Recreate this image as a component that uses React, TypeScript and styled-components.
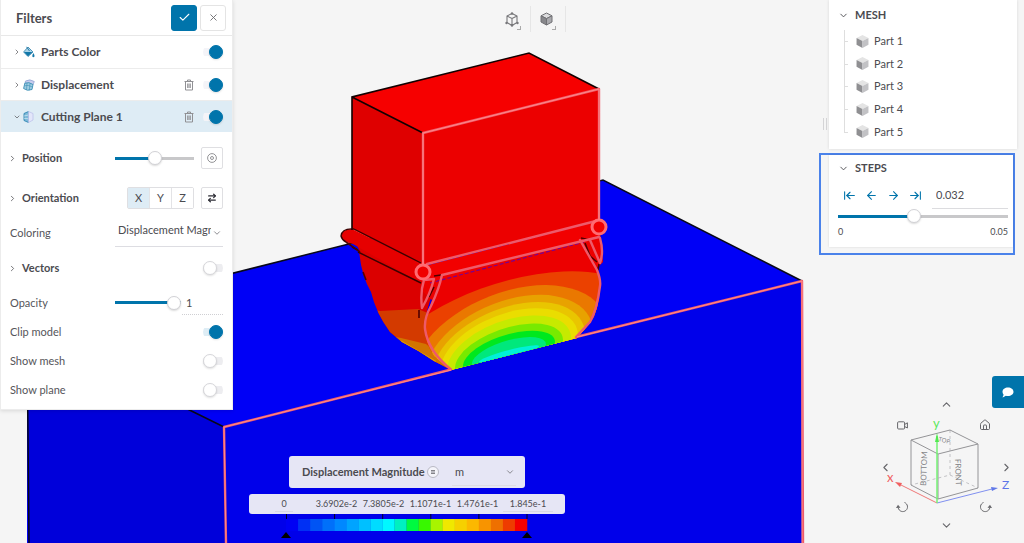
import React, { useState } from "react";
import styled, { createGlobalStyle } from "styled-components";
import {
  ArrowLeft,
  ArrowLeftToLine,
  ArrowRight,
  ArrowRightLeft,
  ArrowRightToLine,
  Check,
  ChevronDown,
  ChevronLeft,
  ChevronRight,
  ChevronUp,
  House,
  X,
} from "lucide-react";

const GlobalStyle = createGlobalStyle`
  *, *::before, *::after { box-sizing: border-box; }
  body {
    margin: 0;
    background: #f5f5f5;
    color: #4b4b50;
    font-family: Lato, "Liberation Sans", sans-serif;
    font-size: 11px;
    line-height: 16px;
  }
  button, input, select { font: inherit; color: inherit; margin: 0; padding: 0; }
  button { cursor: pointer; background: none; border: 0; }
  svg { display: block; flex: none; }
`;

/* ---------- page frame ---------- */

const Page = styled.main`
  position: relative;
  display: grid;
  grid-template-columns: 233px minmax(0, 1fr) 205px;
  min-height: 100vh;
  overflow: hidden;
`;

const SceneSvg = styled.svg`
  position: absolute;
  inset: 0;
  width: 100%;
  height: 100%;
`;

const Stage = styled.section`
  position: relative;
  display: flex;
  flex-direction: column;
  align-items: flex-start;
`;

const Sidebar = styled.aside`
  position: relative;
  display: flex;
  flex-direction: column;
`;

/* ---------- shared controls ---------- */

const Switch = styled.input.attrs({ type: "checkbox" })<{ $pale?: boolean }>`
  appearance: none;
  display: block;
  width: 20px;
  height: 14px;
  flex: none;
  border-radius: 7px;
  cursor: pointer;
  background: linear-gradient(#ededf0, #ededf0) center / 20px 8px no-repeat;
  &::before {
    content: "";
    display: block;
    width: 14px;
    height: 14px;
    border-radius: 50%;
    background: #fff;
    border: 1px solid #d6d6da;
    box-shadow: 0 1px 2px rgba(0, 0, 0, 0.12);
  }
  &:checked {
    background-image: ${(p) =>
      p.$pale ? "linear-gradient(#f4f4f8, #f4f4f8)" : "linear-gradient(#deedf5, #deedf5)"};
  }
  &:checked::before {
    margin-left: 6px;
    background: #0074ab;
    border-color: #0074ab;
  }
`;

const Range = styled.input.attrs({ type: "range" })<{ $fill: number }>`
  appearance: none;
  display: block;
  width: 100%;
  height: 14px;
  background: linear-gradient(
      to right,
      #0074ab ${(p) => p.$fill}%,
      #c8c8ca ${(p) => p.$fill}%
    )
    center / 100% 3px no-repeat;
  &::-webkit-slider-thumb {
    appearance: none;
    width: 14px;
    height: 14px;
    border-radius: 50%;
    background: #fff;
    border: 1px solid #d2d2d6;
    box-shadow: 0 1px 2px rgba(0, 0, 0, 0.15);
  }
`;

const SelectBox = styled.div<{ $width: number; $raised?: boolean }>`
  display: grid;
  align-items: center;
  width: ${(p) => p.$width}px;
  border-bottom: 1px solid #dddde2;
  > * { grid-area: 1 / 1; }
  > svg { justify-self: end; pointer-events: none; color: #77777c; margin-right: 1px; }
  select {
    appearance: none;
    width: 100%;
    height: 26px;
    padding: 0 12px ${(p) => (p.$raised ? 6 : 0)}px 3px;
    border: 0;
    background: none;
    overflow: hidden;
    outline: 0;
  }
`;

/* ---------- filters panel ---------- */

const FilterPanel = styled.aside`
  position: relative;
  align-self: start;
  background: #fff;
  border: 1px solid #ececec;
  border-top: 0;
  padding-bottom: 5px;
  box-shadow: 0 1px 4px rgba(0, 0, 0, 0.12);
`;

const PanelHeader = styled.header`
  display: flex;
  align-items: center;
  gap: 3px;
  height: 36px;
  padding: 0 6px 0 15px;
  border-bottom: 1px solid #e8e8e8;
`;

const PanelTitle = styled.h1`
  flex: 1;
  margin: 0;
  font-size: 13px;
  font-weight: 700;
`;

const HeaderButton = styled.button<{ $primary?: boolean }>`
  display: grid;
  place-items: center;
  width: 26px;
  height: 26px;
  border-radius: 3px;
  border: 1px solid ${(p) => (p.$primary ? "#0074ab" : "#e4e4e4")};
  background: ${(p) => (p.$primary ? "#0074ab" : "#fff")};
  color: ${(p) => (p.$primary ? "#fff" : "#6c6c70")};
`;

const FilterRow = styled.div<{ $active?: boolean }>`
  display: flex;
  align-items: center;
  height: 32px;
  padding: 0 9px 0 12px;
  background: ${(p) => (p.$active ? "#deecf5" : "#fff")};
  & + & { border-top: 1px solid #ececec; }
`;

const FilterToggle = styled.button`
  display: flex;
  flex: 1;
  align-items: center;
  text-align: left;
  font-size: 12px;
  font-weight: 700;
  gap: 2px;
  > span { margin-left: 4px; }
`;

const TrashButton = styled.button`
  margin-right: 9px;
  color: #909094;
`;

const Settings = styled.div`
  padding-top: 6px;
`;

const SettingRow = styled.div<{ $height: number }>`
  display: flex;
  align-items: center;
  justify-content: space-between;
  height: ${(p) => p.$height}px;
  padding: 0 9px;
`;

const SettingName = styled.label`
  color: #55555a;
`;

const GroupToggle = styled.button`
  display: flex;
  align-items: center;
  gap: 5px;
  margin-left: -2px;
  font-weight: 700;
  color: #4b4b50;
`;

const ControlSet = styled.div<{ $width?: number; $gap?: number }>`
  display: flex;
  align-items: center;
  justify-content: flex-end;
  gap: ${(p) => p.$gap ?? 7}px;
  width: ${(p) => (p.$width ? `${p.$width}px` : "auto")};
`;

const SquareButton = styled.button`
  display: grid;
  place-items: center;
  flex: none;
  width: 22px;
  height: 22px;
  border: 1px solid #dfdfe2;
  border-radius: 2px;
  background: #fff;
  color: #2c2c34;
`;

const AxisGroup = styled.div`
  display: flex;
  border: 1px solid #dfdfe2;
  border-radius: 2px;
`;

const AxisButton = styled.button<{ $on?: boolean }>`
  width: 21px;
  height: 20px;
  background: ${(p) => (p.$on ? "#deecf5" : "#fff")};
  & + & { border-left: 1px solid #e3e3e6; width: 22px; }
`;

const NumberField = styled.input.attrs({ type: "text" })`
  display: block;
  width: 41px;
  height: 25px;
  padding: 0 4px;
  border: 0;
  border-bottom: 1px dotted #cfcfd3;
  background: none;
`;

/* ---------- stage ---------- */

const ViewTools = styled.div`
  display: flex;
  align-self: center;
  padding: 6px 0 0 10px;
`;

const ViewTool = styled.button`
  position: relative;
  display: grid;
  place-items: center;
  width: 35px;
  height: 26px;
  border-right: 1px solid #e6e6e6;
  padding: 0 3px 0 0;
  &::after {
    content: "";
    position: absolute;
    right: 9px;
    bottom: 2px;
    width: 4px;
    height: 4px;
    border: solid #aaa;
    border-width: 0 1px 1px 0;
  }
`;

const Legend = styled.div`
  display: flex;
  flex-direction: column;
  align-items: center;
  width: 316px;
  margin: auto 0 4px 16px;
`;

const LegendTitle = styled.div`
  display: flex;
  align-items: center;
  width: 236px;
  height: 32px;
  margin-bottom: 6px;
  padding: 0 9px 0 13px;
  border-radius: 3px;
  background: #e6e6f5;
  gap: 2px;
  strong { font-weight: 700; white-space: nowrap; }
  > :last-child { margin-left: auto; }
`;

const RoundButton = styled.button`
  display: grid;
  place-items: center;
  flex: none;
  width: 12px;
  height: 12px;
  border: 1px solid #b9b9c4;
  border-radius: 50%;
  background: #f4f4fa;
`;

const LegendScale = styled.div`
  display: grid;
  grid-template-columns: 58px repeat(4, 47px) 54px;
  align-items: center;
  width: 100%;
  height: 20px;
  padding-left: 6px;
  border-radius: 3px;
  background: #e6e6f5;
  font-size: 9px;
  text-align: center;
`;

const LimitField = styled.input.attrs({ type: "text" })<{ $width: number }>`
  justify-self: center;
  width: ${(p) => p.$width}px;
  height: 16px;
  border: 0;
  border-bottom: 1px solid #d8d8e4;
  background: none;
  text-align: center;
`;

/* ---------- right sidebar ---------- */

const MeshPanel = styled.section`
  position: relative;
  margin: 0 7px 4px 10px;
  padding-bottom: 6px;
  background: #fff;
  box-shadow: 0 0 3px rgba(0, 0, 0, 0.12);
`;

const ResizeGrip = styled.span`
  position: absolute;
  left: -6px;
  top: 118px;
  width: 4px;
  height: 12px;
  border: solid #d4d4d6;
  border-width: 0 1px;
`;

const SectionToggle = styled.button<{ $height: number }>`
  display: flex;
  align-items: center;
  gap: 6px;
  width: 100%;
  height: ${(p) => p.$height}px;
  padding: 0 9px;
  font-weight: 700;
  font-size: 11px;
`;

const Tree = styled.ul`
  display: grid;
  grid-auto-rows: 1fr;
  height: 113px;
  margin: 0;
  padding: 0 0 0 15px;
  list-style: none;
`;

const TreeItem = styled.li`
  position: relative;
  display: flex;
  align-items: center;
  gap: 5px;
  padding-left: 12px;
  &::before {
    content: "";
    position: absolute;
    left: 0;
    top: 0;
    bottom: 0;
    border-left: 1px solid #dedede;
  }
  &::after {
    content: "";
    position: absolute;
    left: 0;
    top: 50%;
    width: 4px;
    border-top: 1px solid #dedede;
  }
  &:last-child::before { bottom: 50%; }
`;

const StepsFrame = styled.section`
  margin-right: 9px;
  padding: 0 0 6px 8px;
  border: 2px solid #4a82ea;
`;

const StepsPanel = styled.div`
  padding-bottom: 8px;
  background: #fff;
  box-shadow: 0 0 2px rgba(0, 0, 0, 0.12);
`;

const StepsBody = styled.div`
  padding: 0 5px 0 9px;
`;

const StepControls = styled.div`
  display: flex;
  align-items: center;
  height: 28px;
  padding-left: 5px;
  gap: 9px;
  button { color: #0074ab; }
  input { width: auto; flex: 1; min-width: 0; height: 27px; border-bottom: 1px solid #dcdcdf; margin-left: 1px; padding: 0 4px; }
`;

const RangeLabels = styled.div`
  display: flex;
  justify-content: space-between;
  height: 14px;
  margin-top: 2px;
  font-size: 9px;
  line-height: 14px;
`;

const ChatButton = styled.button`
  display: grid;
  place-items: center;
  align-self: flex-end;
  width: 32px;
  height: 32px;
  margin-top: auto;
  border-radius: 3px 0 0 3px;
  background: #0074ab;
  z-index: 1;
`;

const Navigator = styled.div`
  display: grid;
  align-self: flex-end;
  grid-template-columns: 14px 20px 1fr 10px 23px;
  grid-template-rows: 14px 28px 1fr 22px 14px;
  width: 135px;
  height: 135px;
  margin: -11px 11px 11px 0;
  place-items: center;
  button { color: #66666a; }
`;

const NavButton = styled.button<{ $area: string; $end?: boolean }>`
  grid-area: ${(p) => p.$area};
  justify-self: ${(p) => (p.$end ? "end" : "center")};
`;

const CubeSvg = styled.svg`
  grid-area: 1 / 1 / -1 / -1;
  width: 100%;
  height: 100%;
`;

/* ---------- drawings ---------- */

const BANDS = [
  { rx: 142, ry: 74, fill: "#eb4100" },
  { rx: 98, ry: 64, fill: "#ea7800" },
  { rx: 84, ry: 55, fill: "#e8a200" },
  { rx: 76, ry: 48, fill: "#e9c500" },
  { rx: 69, ry: 42, fill: "#eadd00" },
  { rx: 62, ry: 35, fill: "#c6ea00" },
  { rx: 54, ry: 27, fill: "#78ea00" },
  { rx: 46, ry: 20, fill: "#00e81e" },
  { rx: 37, ry: 14, fill: "#00e87c" },
  { rx: 30, ry: 4, fill: "#00f0d8" },
];

function Scene() {
  const body =
    "M425 266 L599 221 L603 262 L597 268 Q601 282 600 290 Q598 312 590 323 L577 338 L451 370 L434 356 Q424 340 425 328 Q426 315 432 300 L421 290 Z";
  return (
    <SceneSvg viewBox="0 0 1024 543" preserveAspectRatio="xMidYMid slice" aria-hidden="true">
      <defs>
        <clipPath id="section"><path d={body} /></clipPath>
        <clipPath id="flank">
          <path d="M354 238 L425 272 L434 290 Q424 315 425 328 Q426 348 451 370 L434 361 Q418 350 402 342 L390 332 Q376 313 371 292 Q361 275 359 250 Z" />
        </clipPath>
      </defs>
      <path d="M27 325 L603 180 L802 281 L802 543 L27 543 Z" fill="#0000f6" />
      <path d="M27 330 L224 427 L226 543 L29 543 Z" fill="#0000da" />
      <path d="M224 427 L450 370 L577 337 L802 281 L803 543 L226 543 Z" fill="#0000ea" />
      <path d="M27 325 L603 180 L802 281 M27 330 L224 427 M27 330 L29 543" fill="none" stroke="#080818" strokeWidth="1.5" />

      <g clipPath="url(#flank)">
        <rect x="340" y="230" width="120" height="150" fill="#db0000" />
        <path d="M340 303 L380 311 L418 309 L440 318 V380 H340 Z" fill="#d33a00" />
        <path d="M385 335 L401 338 L426 344 L451 365 V380 H385 Z" fill="#d27400" />
        <path d="M392 340 L402 341 L436 361 L430 370 Z" fill="#d9a800" />
      </g>

      <g clipPath="url(#section)">
        <rect x="410" y="210" width="200" height="170" fill="#ec0000" />
        <g transform="matrix(1 -0.26 0 1 509 354)">
          {BANDS.map((b) => (
            <ellipse key={b.fill} cx="0" cy="0" rx={b.rx} ry={b.ry} fill={b.fill} />
          ))}
        </g>
        <path d="M425 266 L599 221 L599 237 L430 282 Z" fill="#f20000" />
      </g>
      <path d="M430 283 L584 242" stroke="#7a0090" strokeWidth="1.2" strokeDasharray="4 2" />

      <path d="M352 97 L529 53 L599 89 L423 133 Z" fill="#f60000" />
      <path d="M352 97 L423 133 L423 265 L352 229 Z" fill="#df0000" />
      <path d="M423 133 L599 89 L599 221 L423 265 Z" fill="#ec0000" />
      <path d="M352 229 Q342 229 341 236 Q342 242 353 244 L421 283 L430 272 L423 264 Z" fill="#e60000" />
      <path d="M352 230 L352 97 L529 53 L599 89 M352 97 L423 133" fill="none" stroke="#120000" strokeWidth="1.6" />
      <path d="M421 263 L354 229 M352 247 L358 250 M358 252 L421 283" fill="none" stroke="#3a0000" strokeWidth="1.4" />
      <path d="M354 229 Q342 228 341 236 Q342 240 346 242" fill="none" stroke="#3a0000" strokeWidth="1.4" />
      <path d="M346 242 L360 252 M363 272 L366 280 M419 310 L419 318 M434 276 L441 275 M434 287 L429 297 M581 238 L590 240 M585 243 L590 256 L597 262 M599 264 L598 270" fill="none" stroke="#500000" strokeWidth="1.6" strokeLinejoin="round" />

      <g fill="none" stroke="#ee5a6a" strokeWidth="2.4" strokeLinejoin="round" strokeLinecap="round">
        <path d="M423 133 L599 89 V220 M423 133 V264" />
        <path d="M427 264 L596 221 M599 237 L442 275 Q439 289 431 306 Q424 318 425 329 Q428 351 451 369.500 L224 427 L226 543" />
        <path d="M580 240 Q589 256 597 270 Q601 280 600 286 Q597 310 590 322 L576 337 L802 281 L803 543" />
        <path d="M424 280 Q420 292 422 308 Q430 294 434 279 Z M590 240 L600 263 Q604 252 600 238" />
      </g>
      <g fill="#f00000" stroke="#ff6b72" strokeWidth="3">
        <circle cx="423" cy="272" r="7" />
        <circle cx="599" cy="227" r="7" />
      </g>
      <path d="M423 133 L599 89 V220 M423 133 V264 M224 427 L451 370 M577 337 L802 281 V543 M224 427 L226 543" fill="none" stroke="#ff8b88" strokeWidth="1" />
    </SceneSvg>
  );
}

function Cube({ size }: { size: number }) {
  return (
    <svg width={size} height={size} viewBox="0 0 12 12">
      <path d="M6 0 L11.500 2.800 L6 5.600 L.5 2.800 Z" fill="#e4e4e4" />
      <path d="M.5 2.800 L6 5.600 V12 L.5 9 Z" fill="#8f8f92" />
      <path d="M11.500 2.800 L6 5.600 V12 L11.500 9 Z" fill="#c2c2c5" />
    </svg>
  );
}

function WireCubeIcon() {
  return (
    <svg width="14" height="15" viewBox="0 0 14 15" fill="none" stroke="#77777a" strokeWidth="1.1" strokeLinejoin="round">
      <path d="M7 1.500 L12 4 V10.500 L7 13.500 L2 10.500 V4 Z M2 4 L7 6.500 L12 4 M7 6.500 V13.500" />
      <g fill="#77777a" stroke="none">
        <circle cx="7" cy="1.500" r="1.200" /><circle cx="1.500" cy="11" r="1.200" />
        <circle cx="12.500" cy="11" r="1.200" /><circle cx="7" cy="13.500" r="1.200" />
      </g>
    </svg>
  );
}

function SolidCubeIcon() {
  return (
    <svg width="13" height="14" viewBox="0 0 13 14" stroke="#707074" strokeWidth="1" strokeLinejoin="round">
      <path d="M6.500 1 L12 3.800 L6.500 6.600 L1 3.800 Z" fill="#dcdcde" />
      <path d="M1 3.800 L6.500 6.600 V13 L1 10 Z" fill="#87878b" />
      <path d="M12 3.800 L6.500 6.600 V13 L12 10 Z" fill="#a9a9ad" />
    </svg>
  );
}

function PaintIcon() {
  return (
    <svg width="12" height="12" viewBox="0 0 12 12">
      <path d="M5 1 L10 6 L5 10.500 L.6 6 Z" fill="#a9d3e8" stroke="#2f7fa8" strokeWidth=".8" />
      <path d="M1 6 H9.500 L5 10.300 Z" fill="#1277a8" />
      <path d="M3.500 .8 L6.500 5" stroke="#2f7fa8" strokeWidth="1" />
      <path d="M10.300 7 Q12 9.500 11.500 10.600 Q10.300 12 9.300 10.600 Q9 9.500 10.300 7" fill="#1277a8" />
    </svg>
  );
}

function DisplacementIcon() {
  return (
    <svg width="12" height="12" viewBox="0 0 12 12" fill="none">
      <path d="M2.500 2 Q7 -.5 11.300 2.500 L10 6 L8 4.500 L2 4.500 Z" fill="#c9cdee" stroke="#7d93c9" strokeWidth=".6" />
      <path d="M1.800 4.200 Q6 2.500 10 5.500 L9 10.500 Q4 12.500 .6 9.500 Z" fill="#9fcde2" stroke="#3c8fb5" strokeWidth=".9" />
      <path d="M4 4 L3.500 11 M7 4.300 L6.300 11.400 M1.300 6.800 Q5 5.500 9.600 8" stroke="#3c8fb5" strokeWidth=".6" />
    </svg>
  );
}

function CuttingIcon() {
  return (
    <svg width="12" height="12" viewBox="0 0 12 12" fill="none">
      <path d="M1 2.500 L5.500 .5 V11.500 L1 9.500 Z" fill="#7db9d8" stroke="#2f86b3" strokeWidth=".9" />
      <path d="M1 5 L5.500 4 M1 7.300 L5.500 7.800" stroke="#e8f4fa" strokeWidth=".6" />
      <path d="M5.500 .5 L10 2.500 V9 L5.500 11.500 Z" fill="#e3e6fa" stroke="#b9bdea" strokeWidth=".7" />
    </svg>
  );
}

function TrashIcon() {
  return (
    <svg width="10" height="12" viewBox="0 0 10 12" fill="none" stroke="currentColor" strokeWidth="1">
      <path d="M.5 2.500 H9.500 M3.500 2.500 V1 H6.500 V2.500 M1.500 2.500 V11 H8.500 V2.500 M3.700 4.500 V9 M5 4.500 V9 M6.300 4.500 V9" />
    </svg>
  );
}

function TargetIcon() {
  return (
    <svg width="10" height="10" viewBox="0 0 10 10" fill="none" stroke="#7a7a7e">
      <circle cx="5" cy="5" r="4.400" strokeWidth=".8" />
      <circle cx="5" cy="5" r="1.500" strokeWidth=".8" />
    </svg>
  );
}

function CameraIcon() {
  return (
    <svg width="11" height="9" viewBox="0 0 11 9" fill="none" stroke="currentColor" strokeLinejoin="round">
      <rect x=".6" y=".8" width="7" height="7.200" rx="1" />
      <path d="M7.600 3.500 L10.400 1.800 V7 L7.600 5.500" />
    </svg>
  );
}

function RotateIcon({ mirrored }: { mirrored?: boolean }) {
  return (
    <svg width="13" height="12" viewBox="0 0 13 12" fill="none">
      <g transform={mirrored ? "matrix(-1 0 0 1 13 0)" : undefined}>
        <path d="M8.500 1.500 A4.700 4.700 0 1 1 2.200 6.800" stroke="currentColor" strokeWidth="1" />
        <path d="M0 7 L2 3.800 L4.500 6.700 Z" fill="currentColor" />
      </g>
    </svg>
  );
}

const LEGEND_COLORS = [
  "#0000f4", "#0030f4", "#0054f4", "#0070fa", "#0088ff", "#00a4ff", "#00c0ff", "#00dcff", "#00f8ff", "#00f0c0",
  "#00fa40", "#38f800", "#a8f400", "#f0e800", "#f6d000", "#fcb800", "#f89400", "#ee7000", "#ee3c00", "#f40000",
];

function LegendBar() {
  return (
    <svg width="316" height="25" viewBox="0 0 316 25" role="img" aria-label="Colour scale">
      {LEGEND_COLORS.map((c, i) => (
        <rect key={c} x={37 + i * 12.05} y="5" width="12.3" height="12" fill={c} />
      ))}
      {[0, 1, 2, 3, 4, 5].map((i) => (
        <path key={i} d={`M${37.5 + i * 48.1} 0 V5`} stroke="#000020" />
      ))}
      <path d="M32 24 L37 18 L42 24 Z M273 24 L278 18 L283 24 Z" fill="#000" />
    </svg>
  );
}

function ViewCube() {
  return (
    <CubeSvg viewBox="878 397 135 135" fill="none" role="img" aria-label="View orientation">
      <path d="M950 430 V475 L911 485 M950 475 L978 488" stroke="#c2c2c5" strokeDasharray="3 3" />
      <path d="M911 440 L950 430 L978 444 L938 454 Z V485 L938 499 L978 488 V444 M938 454 V499" stroke="#949497" strokeLinejoin="round" />
      <path d="M937 503 L899 484" stroke="#f07878" />
      <path d="M895 482 L902 483 L900 487 Z" fill="#f06060" />
      <path d="M937 503 L992 489" stroke="#8090f0" />
      <path d="M998 488 L991 487 L992 491 Z" fill="#6078e8" />
      <path d="M937 503 V436" stroke="#74f074" strokeWidth="1.500" />
      <path d="M937 433 L939 442 H935 Z" fill="#50e850" />
      <g fontFamily="Lato, sans-serif" fontSize="13">
        <text x="887" y="482" fill="#f06060">x</text>
        <text x="933" y="428" fill="#5ce85c">y</text>
        <text x="1002" y="489" fontSize="12" fill="#5c74e8">Z</text>
      </g>
      <g fontFamily="Lato, sans-serif" fontSize="8" fill="#838386">
        <text transform="translate(926 486) rotate(-88)">BOTTOM</text>
        <text transform="translate(955 459) rotate(88)">FRONT</text>
        <text transform="translate(938 441) rotate(14)" fontSize="6">TOP</text>
      </g>
    </CubeSvg>
  );
}

/* ---------- application ---------- */

const PARTS = ["Part 1", "Part 2", "Part 3", "Part 4", "Part 5"];

export default function App() {
  const [position, setPosition] = useState(50);
  const [opacity, setOpacity] = useState(100);
  const [step, setStep] = useState(44);
  const [axis, setAxis] = useState("X");

  return (
    <>
      <GlobalStyle />
      <Page>
        <Scene />

        <FilterPanel>
          <PanelHeader>
            <PanelTitle>Filters</PanelTitle>
            <HeaderButton $primary aria-label="Apply"><Check size={13} /></HeaderButton>
            <HeaderButton aria-label="Close"><X size={11} /></HeaderButton>
          </PanelHeader>

          <FilterRow>
            <FilterToggle><ChevronRight size={8} /><PaintIcon /><span>Parts Color</span></FilterToggle>
            <Switch $pale defaultChecked aria-label="Parts Color" />
          </FilterRow>
          <FilterRow>
            <FilterToggle><ChevronRight size={8} /><DisplacementIcon /><span>Displacement</span></FilterToggle>
            <TrashButton aria-label="Delete Displacement"><TrashIcon /></TrashButton>
            <Switch $pale defaultChecked aria-label="Displacement" />
          </FilterRow>
          <FilterRow $active>
            <FilterToggle><ChevronDown size={8} /><CuttingIcon /><span>Cutting Plane 1</span></FilterToggle>
            <TrashButton aria-label="Delete Cutting Plane 1"><TrashIcon /></TrashButton>
            <Switch $pale defaultChecked aria-label="Cutting Plane 1" />
          </FilterRow>

          <Settings>
            <SettingRow $height={40}>
              <GroupToggle><ChevronRight size={9} />Position</GroupToggle>
              <ControlSet $width={108}>
                <Range aria-label="Position" value={position} $fill={position} onChange={(e) => setPosition(+e.target.value)} />
                <SquareButton aria-label="Pick position"><TargetIcon /></SquareButton>
              </ControlSet>
            </SettingRow>
            <SettingRow $height={40}>
              <GroupToggle><ChevronRight size={9} />Orientation</GroupToggle>
              <ControlSet>
                <AxisGroup>
                  {["X", "Y", "Z"].map((a) => (
                    <AxisButton key={a} $on={a === axis} onClick={() => setAxis(a)}>{a}</AxisButton>
                  ))}
                </AxisGroup>
                <SquareButton aria-label="Flip direction"><ArrowRightLeft size={10} strokeWidth={3} /></SquareButton>
              </ControlSet>
            </SettingRow>
            <SettingRow $height={30}>
              <SettingName htmlFor="coloring">Coloring</SettingName>
              <SelectBox $width={108} $raised>
                <select id="coloring"><option>Displacement Magnitude</option></select>
                <ChevronDown size={10} />
              </SelectBox>
            </SettingRow>
            <SettingRow $height={40}>
              <GroupToggle><ChevronRight size={9} />Vectors</GroupToggle>
              <Switch aria-label="Vectors" />
            </SettingRow>
            <SettingRow $height={29}>
              <SettingName htmlFor="opacity">Opacity</SettingName>
              <ControlSet $width={108} $gap={1}>
                <Range id="opacity" value={opacity} $fill={opacity} onChange={(e) => setOpacity(+e.target.value)} />
                <NumberField aria-label="Opacity value" value={String(opacity / 100)} readOnly />
              </ControlSet>
            </SettingRow>
            <SettingRow $height={29}>
              <SettingName htmlFor="clip">Clip model</SettingName>
              <Switch id="clip" defaultChecked />
            </SettingRow>
            <SettingRow $height={29}>
              <SettingName htmlFor="mesh">Show mesh</SettingName>
              <Switch id="mesh" />
            </SettingRow>
            <SettingRow $height={29}>
              <SettingName htmlFor="plane">Show plane</SettingName>
              <Switch id="plane" />
            </SettingRow>
          </Settings>
        </FilterPanel>

        <Stage>
          <ViewTools>
            <ViewTool aria-label="Projection"><WireCubeIcon /></ViewTool>
            <ViewTool aria-label="Render mode"><SolidCubeIcon /></ViewTool>
          </ViewTools>
          <Legend>
            <LegendTitle>
              <strong>Displacement Magnitude</strong>
              <RoundButton aria-label="Field options">
                <svg width="4" height="4" viewBox="0 0 4 4"><path d="M0 .5 H4 M0 2 H4 M0 3.500 H4" stroke="#66666c" strokeWidth=".8" /></svg>
              </RoundButton>
              <SelectBox $width={64}>
                <select aria-label="Unit"><option>m</option></select>
                <ChevronDown size={10} />
              </SelectBox>
            </LegendTitle>
            <LegendScale>
              <LimitField $width={18} aria-label="Minimum" defaultValue="0" />
              <span>3.6902e-2</span>
              <span>7.3805e-2</span>
              <span>1.1071e-1</span>
              <span>1.4761e-1</span>
              <LimitField $width={50} aria-label="Maximum" defaultValue="1.845e-1" />
            </LegendScale>
            <LegendBar />
          </Legend>
        </Stage>

        <Sidebar>
          <MeshPanel>
            <ResizeGrip />
            <SectionToggle $height={30}><ChevronDown size={11} />MESH</SectionToggle>
            <Tree>
              {PARTS.map((name) => (
                <TreeItem key={name}><Cube size={13} />{name}</TreeItem>
              ))}
            </Tree>
          </MeshPanel>

          <StepsFrame>
            <StepsPanel>
              <SectionToggle $height={26}><ChevronDown size={11} />STEPS</SectionToggle>
              <StepsBody>
                <StepControls>
                  <button aria-label="First step"><ArrowLeftToLine size={13} /></button>
                  <button aria-label="Previous step"><ArrowLeft size={13} /></button>
                  <button aria-label="Next step"><ArrowRight size={13} /></button>
                  <button aria-label="Last step"><ArrowRightToLine size={13} /></button>
                  <NumberField aria-label="Step" defaultValue="0.032" />
                </StepControls>
                <Range aria-label="Step position" value={step} $fill={step} onChange={(e) => setStep(+e.target.value)} />
                <RangeLabels><span>0</span><span>0.05</span></RangeLabels>
              </StepsBody>
            </StepsPanel>
          </StepsFrame>

          <ChatButton aria-label="Chat">
            <svg width="12" height="11" viewBox="0 0 12 11">
              <path d="M6 .5 C9 .5 11.500 2.300 11.500 4.800 C11.500 7.300 9 9 6 9 C5.200 9 4.500 8.900 3.800 8.700 C2.800 9.500 1.500 10.200 .3 10.200 C1 9.400 1.500 8.300 1.500 7.400 C.8 6.700 .5 5.800 .5 4.800 C.5 2.300 3 .5 6 .5 Z" fill="#fff" />
            </svg>
          </ChatButton>
          <Navigator>
            <ViewCube />
            <NavButton $area="1 / 3" aria-label="Rotate up"><ChevronUp size={13} /></NavButton>
            <NavButton $area="5 / 3" aria-label="Rotate down"><ChevronDown size={13} /></NavButton>
            <NavButton $area="3 / 1" aria-label="Rotate left"><ChevronLeft size={13} /></NavButton>
            <NavButton $area="3 / 5" $end aria-label="Rotate right"><ChevronRight size={13} /></NavButton>
            <NavButton $area="2 / 2" aria-label="Camera"><CameraIcon /></NavButton>
            <NavButton $area="2 / 4" aria-label="Home view"><House size={12} /></NavButton>
            <NavButton $area="4 / 2" aria-label="Roll left"><RotateIcon /></NavButton>
            <NavButton $area="4 / 4" aria-label="Roll right"><RotateIcon mirrored /></NavButton>
          </Navigator>
        </Sidebar>
      </Page>
    </>
  );
}
